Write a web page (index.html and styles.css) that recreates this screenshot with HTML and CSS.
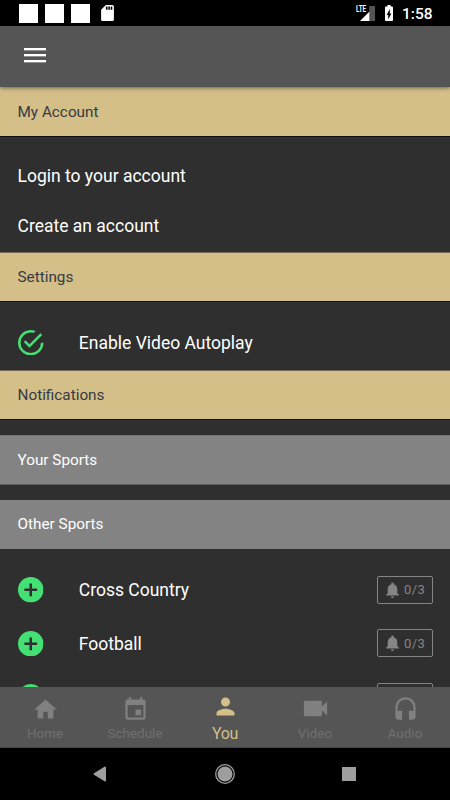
FILE: index.html
```html
<!DOCTYPE html>
<html lang="en">
<head>
<meta charset="utf-8">
<title>You</title>
<link rel="stylesheet" href="styles.css">
</head>
<body>
<svg class="defs" width="0" height="0">
  <symbol id="plus" viewBox="2 2 20 20"><path d="M12 2a10 10 0 1 0 0 20 10 10 0 0 0 0-20zm5 11h-4v4h-2v-4H7v-2h4V7h2v4h4z"/></symbol>
  <symbol id="bell" viewBox="4 2 16 20"><path d="M12 22c1.100 0 2-.9 2-2h-4c0 1.100.9 2 2 2zm6-6v-5c0-3.070-1.640-5.640-4.500-6.320V4a1.500 1.500 0 0 0-3 0v.68C7.630 5.360 6 7.920 6 11v5l-2 2v1h16v-1z"/></symbol>
</svg>
<div class="screen">
  <header class="status">
    <i class="box"></i><i class="box"></i><i class="box"></i>
    <svg class="sd" viewBox="4 2 16 20"><path d="M18 2h-8L4 8v12c0 1.100.9 2 2 2h12c1.100 0 2-.9 2-2V4c0-1.100-.9-2-2-2zm-6 6h-2V4h2zm3 0h-2V4h2zm3 0h-2V4h2z"/></svg>
    <div class="signal">
      <svg viewBox="0 0 15 15"><path fill="#fff" d="M15 0v15H0z"/><path class="weak" d="M9.300 0H15v15H9.300z"/></svg>
      <span>LTE</span>
    </div>
    <svg class="battery" viewBox="7 2 10 20"><path d="M15.670 4H14V2h-4v2H8.330C7.600 4 7 4.600 7 5.330v15.330C7 21.400 7.600 22 8.330 22h7.330c.74 0 1.340-.6 1.340-1.330V5.330C17 4.600 16.400 4 15.670 4zM11 20v-5.500H9L13 7v5.500h2z"/></svg>
    <time>1:58</time>
  </header>
  <nav class="toolbar"><div class="menu"><i></i><i></i><i></i></div></nav>
  <main>
    <h2 class="gold first">My Account</h2>
    <div class="links"><a>Login to your account</a><a>Create an account</a></div>
    <h2 class="gold">Settings</h2>
    <div class="setting">
      <svg class="mark" viewBox="2 2 20 20"><path d="M7.910 10.080L6.500 11.500 11 16 21 6l-1.410-1.420L11 13.170zM20 12a8 8 0 1 1-8-8c.76 0 1.500.11 2.200.31l1.570-1.570A10 10 0 1 0 22 12z"/></svg>
      <span>Enable Video Autoplay</span>
    </div>
    <h2 class="gold">Notifications</h2>
    <h3>Your Sports</h3>
    <h3 class="other">Other Sports</h3>
    <div class="sports">
      <div class="sport"><svg class="mark"><use href="#plus"/></svg><span class="name">Cross Country</span><div class="count"><svg><use href="#bell"/></svg><span>0/3</span></div></div>
      <div class="sport"><svg class="mark"><use href="#plus"/></svg><span class="name">Football</span><div class="count"><svg><use href="#bell"/></svg><span>0/3</span></div></div>
      <div class="sport"><svg class="mark"><use href="#plus"/></svg><span class="name"></span><div class="count"></div></div>
    </div>
  </main>
  <nav class="tabs">
    <div class="tab"><svg viewBox="0 0 24 24"><path d="M10 20v-6h4v6h5v-8h3L12 3 2 12h3v8z"/></svg><span>Home</span></div>
    <div class="tab"><svg viewBox="0 0 24 24"><path d="M17 12h-5v5h5zM16 1v2H8V1H6v2H5a2 2 0 0 0-2 2v14c0 1.100.9 2 2 2h14c1.100 0 2-.9 2-2V5c0-1.100-.9-2-2-2h-1V1zm3 18H5V8h14z"/></svg><span>Schedule</span></div>
    <div class="tab active"><svg viewBox="0 0 24 24"><path d="M12 12a4 4 0 1 0 0-8 4 4 0 0 0 0 8zm0 2c-2.670 0-8 1.340-8 4v2h16v-2c0-2.660-5.330-4-8-4z"/></svg><span>You</span></div>
    <div class="tab video"><svg viewBox="0 0 24 24"><path d="M17 10.500V7c0-.55-.45-1-1-1H4c-.55 0-1 .45-1 1v10c0 .55.45 1 1 1h12c.55 0 1-.45 1-1v-3.500l4 4v-11z"/></svg><span>Video</span></div>
    <div class="tab"><svg viewBox="0 0 24 24"><path d="M12 1a9 9 0 0 0-9 9v8a3 3 0 0 0 3 3h3v-8H5v-3a7 7 0 0 1 14 0v3h-4v8h3a3 3 0 0 0 3-3v-8a9 9 0 0 0-9-9z"/></svg><span>Audio</span></div>
  </nav>
  <footer class="system">
    <svg class="back" viewBox="0 0 14 16"><path d="M12 1.500v13L1.500 8z" stroke="#9e9e9e" stroke-width="2" stroke-linejoin="round"/></svg>
    <svg class="circle" viewBox="0 0 22 22"><circle cx="11" cy="11" r="9.300" fill="none" stroke="#9e9e9e" stroke-width="1.300"/><circle cx="11" cy="11" r="7.500"/></svg>
    <i class="recent"></i>
  </footer>
</div>
</body>
</html>
```

FILE: styles.css
```css
* { box-sizing: border-box; }
body { margin: 0; background: #2f2f2f; font-family: Roboto, sans-serif; color: #fff; }
svg { display: block; fill: currentColor; flex: none; }
.defs { position: absolute; }
.screen { width: 450px; height: 800px; display: flex; flex-direction: column; overflow: hidden; }

.status { height: 26px; flex: none; background: #000; display: flex; align-items: center; padding: 0 17px 0 19px; }
.box { width: 19px; height: 19px; margin-right: 7px; background: #fff; }
.sd { width: 13px; height: 16px; margin-left: 4px; }
.signal { position: relative; margin-left: auto; }
.signal svg { width: 15px; height: 15px; margin-top: 1px; }
.signal .weak { fill: #555; }
.signal span { position: absolute; left: -4.500px; top: -1px; background: #000; font-size: 9.500px; line-height: 9px; font-weight: 700; padding-right: 1px; transform: scaleX(.66); transform-origin: left; }
.battery { width: 10px; height: 16px; margin-left: 9px; }
.status time { width: 31px; margin-left: 8px; font-size: 15.500px; font-weight: 500; line-height: 26px; padding-top: 2px; white-space: nowrap; }

.toolbar { height: 61px; flex: none; background: #555; padding: 22px 24px; position: relative; box-shadow: 0 1px 4px rgba(0, 0, 0, .5); }
.menu { width: 22px; display: grid; gap: 4px; }
.menu i { height: 2px; background: #fff; box-shadow: 0 .5px 0 #ccc; }

main { flex: 1; min-height: 0; overflow: hidden; }
h2, h3 { margin: 0; height: 50px; padding-left: 17.500px; font-size: 15.300px; font-weight: 400; line-height: 49px; }
.gold { background: #d4bf88; color: #363a44; border-top: 1px solid #746a51; border-bottom: 1px solid #0c0e18; }
.gold.first { border-top-color: #d4bf88; }
.links { height: 115px; padding: 14px 17.500px 0; }
.links a { display: block; height: 50px; line-height: 51px; font-size: 17.500px; }
.mark { width: 25.500px; height: 25.500px; color: #45e073; }
.setting { height: 68px; display: flex; align-items: center; padding: 13px 18px 0; font-size: 17.500px; }
.setting span, .name { margin-left: 35.300px; }
h3 { background: #838383; margin-top: 15px; border-top: 1px solid #747474; border-bottom: 1px solid #606060; }
.other { height: 49px; line-height: 47px; border-color: #838383; }
.sports { padding-top: 14px; }
.sport { height: 53.500px; display: flex; align-items: center; padding: 0 17px 0 18px; font-size: 17.500px; }
.name { padding-top: 1px; }
.count { width: 56px; height: 28px; margin-left: auto; border: 1px solid #858585; border-radius: 2px; display: flex; align-items: center; gap: 5px; padding-left: 8px; color: #858585; font-size: 13px; letter-spacing: .4px; }
.count svg { width: 13px; height: 16px; }

.tabs { height: 61px; flex: none; background: #555; display: grid; grid-template-columns: repeat(5, 1fr); border-bottom: 1px solid #444; }
.tab { display: flex; flex-direction: column; align-items: center; padding-top: 9px; color: #808080; font-size: 13.300px; }
.tab svg { width: 27px; height: 27px; }
.tab span { line-height: 16px; margin-top: 3px; color: #707070; letter-spacing: .1px; }
.tab.active { color: #d4bf88; padding-top: 6px; }
.tab.active span { color: #d4bf88; font-size: 16px; line-height: 20px; margin-top: 4px; letter-spacing: -.3px; }
.video svg { width: 31px; height: 31px; margin: -3px 0 -1px; }

.system { height: 52px; flex: none; background: #000; color: #9e9e9e; display: flex; align-items: center; padding-left: 93px; }
.back { width: 14px; height: 16px; }
.circle { width: 22px; height: 22px; margin-left: 107px; }
.recent { width: 14px; height: 14px; margin-left: 106px; background: #9e9e9e; }
```
